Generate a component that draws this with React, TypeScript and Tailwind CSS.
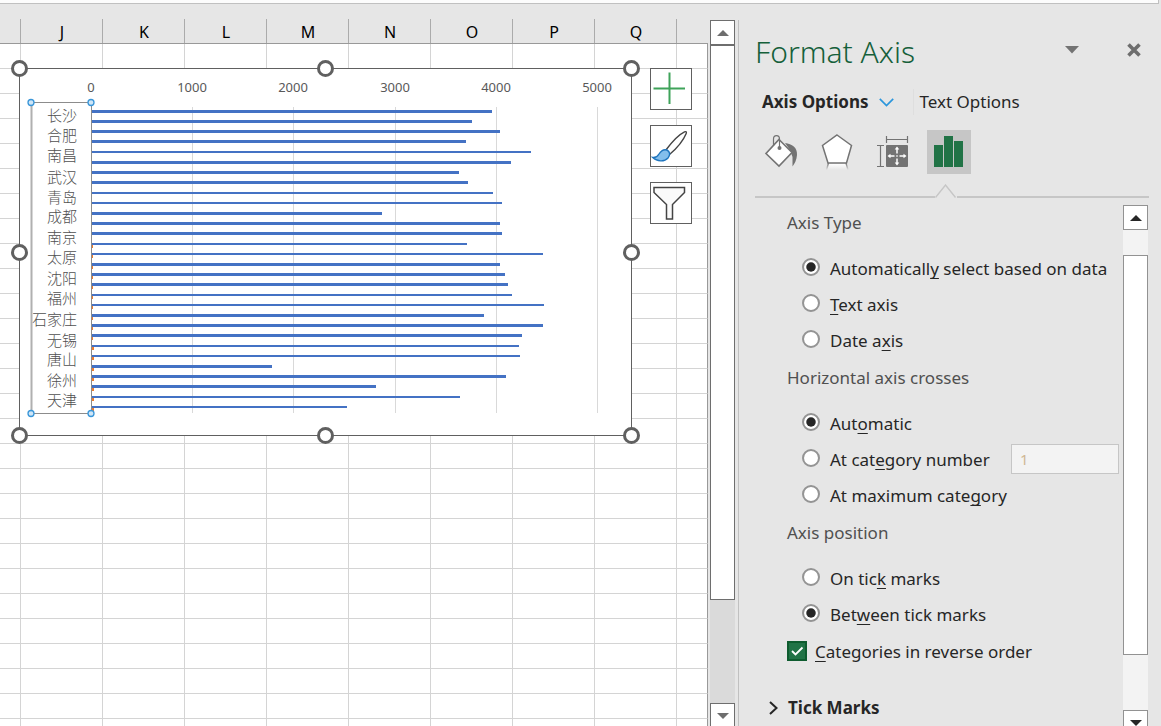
import React from "react";

const columns = ["J", "K", "L", "M", "N", "O", "P", "Q"];
const gridRows = Array.from({ length: 28 }, (_, i) => i);

// [top, thickness, right end, width of the second series]
const bars: [number, number, number, number][] = [
  [110, 3, 492, 0], [120, 3, 472, 0], [130, 3, 500, 0], [140, 3, 466, 0], [151, 2, 531, 0],
  [161, 3, 511, 0], [171, 3, 459, 0], [181, 3, 468, 0], [192, 2, 493, 0], [202, 2, 502, 0],
  [212, 3, 382, 0], [222, 3, 500, 0], [232, 3, 502, 0], [243, 2, 467, 1], [253, 2, 543, 1],
  [263, 3, 500, 1], [273, 3, 505, 1], [283, 3, 508, 1], [294, 2, 512, 1], [304, 2, 544, 1],
  [314, 3, 484, 1], [324, 3, 543, 1], [334, 3, 522, 1], [345, 2, 519, 2], [355, 2, 520, 2],
  [365, 3, 272, 2], [375, 3, 506, 2], [385, 3, 376, 2], [396, 2, 460, 2], [406, 2, 347, 2],
];

const categories: [string, number][] = [
  ["长沙", 121], ["合肥", 141], ["南昌", 161], ["武汉", 183], ["青岛", 203],
  ["成都", 222], ["南京", 243], ["太原", 263], ["沈阳", 284], ["福州", 304],
  ["石家庄", 325], ["无锡", 346], ["唐山", 365], ["徐州", 386], ["天津", 406],
];

const ticks: [string, number][] = [
  ["0", 91], ["1000", 192], ["2000", 293], ["3000", 395], ["4000", 496], ["5000", 597],
];

function Chart() {
  return (
    <svg
      viewBox="10 59 632 386"
      className="absolute left-[10px] top-[55px] h-[386px] w-[632px]"
      role="img"
      aria-label="Bar chart"
    >
      <rect x="19.5" y="68.5" width="612" height="367" fill="#fff" stroke="#606060" />
      {ticks.slice(1).map(([t, x]) => (
        <rect key={t} x={x} y="107" width="1" height="306" fill="#d9d9d9" />
      ))}
      {ticks.map(([t, x]) => (
        <text key={t} x={x} y="92" textAnchor="middle" className="fill-[#595959] font-['Noto_Sans',sans-serif] text-[13px]">
          {t}
        </text>
      ))}
      {bars.map(([y, h, end, extra]) => (
        <g key={y}>
          <rect x="92" y={y} width={end - 92} height={h} fill="#4472c4" />
          {extra > 0 && <rect x="92" y={y + h} width={extra} height="3" fill="#ed7d31" />}
        </g>
      ))}
      {categories.map(([name, y]) => (
        <text key={name} x="77" y={y} textAnchor="end" className="fill-[#505050] font-['Noto_Sans_CJK_SC',sans-serif] text-[15px] font-light">
          {name}
        </text>
      ))}
      <path d="M31.5 102V413" stroke="#b0b0b0" strokeWidth="2" />
      <path d="M31 102.5H91.5V413.5H31" fill="none" stroke="#8c8c8c" />
      {[31, 91].map((x) =>
        [102.5, 413.5].map((y) => (
          <circle key={`${x}-${y}`} cx={x} cy={y} r="3" fill="#cfe6f7" stroke="#3a96d8" strokeWidth="1.3" />
        )),
      )}
      {[19.5, 325.5, 631.5].map((x) =>
        [68.5, 252.5, 435.5].map((y) =>
          x === 325.5 && y === 252.5 ? null : (
            <circle key={`${x}-${y}`} cx={x} cy={y} r="7" fill="#fff" stroke="#606060" strokeWidth="3" />
          ),
        ),
      )}
    </svg>
  );
}

function ChartButton({ label, children }: { label: string; children: React.ReactNode }) {
  return (
    <button aria-label={label} className="size-[42px] border border-[#606060] bg-white">
      <svg viewBox="0 0 40 40" className="size-10" fill="none">
        {children}
      </svg>
    </button>
  );
}

function Sheet() {
  return (
    <section className="relative min-w-0 flex-1 overflow-hidden bg-white">
      <table className="w-full table-fixed border-separate border-spacing-0">
        <colgroup>
          <col className="w-[21px]" />
          {columns.map((c) => (
            <col key={c} className="w-[82px]" />
          ))}
          <col />
        </colgroup>
        <thead>
          <tr className="h-10 bg-[#e6e6e6]">
            {["", ...columns, "end"].map((c) => (
              <th key={c} className="border-b border-[#999] p-0 align-bottom font-normal">
                <div
                  className={
                    c === "end"
                      ? "h-6"
                      : "flex h-6 items-center justify-center border-r border-[#ababab] pl-px pt-0.5 text-[16px] leading-6 text-black"
                  }
                >
                  {c === "end" ? "" : c}
                </div>
              </th>
            ))}
          </tr>
        </thead>
        <tbody>
          {gridRows.map((r) => (
            <tr key={r} className="h-[25px]">
              {["", ...columns].map((c) => (
                <td key={c} className="border-b border-r border-[#d4d4d4] p-0" />
              ))}
              <td className="border-b border-r border-b-[#d4d4d4] border-r-[#999] p-0" />
            </tr>
          ))}
        </tbody>
      </table>
      <Chart />
      <div className="absolute left-[650px] top-16 flex flex-col gap-[15px]">
        <ChartButton label="Chart elements">
          <path d="M2.500 19.500H34M18.500 3.500V35" stroke="#3fa35a" strokeWidth="2" />
        </ChartButton>
        <ChartButton label="Chart styles">
          <path d="M14.5 24.5C20 17 28 8.500 33.500 5.800C35 5.200 35.800 6 35.200 7.500C32.500 14 25 23 18.500 28.500Z" fill="#fff" stroke="#444" strokeWidth="1.4" />
          <path d="M1.800 31.500C5 32 6.500 30.500 8 28C10 24.800 13 23 16 24C19 25.500 19.500 29 17 32C13.500 36 6 35.800 1.800 31.500Z" fill="#83beec" stroke="#1e74bd" strokeWidth="1.400" />
        </ChartButton>
        <ChartButton label="Chart filters">
          <path d="M3 4.500H33.500V9.500L21.500 21.500V36H15.500V21.500L3 9.500Z" fill="#fafafa" stroke="#444" strokeWidth="1.500" />
        </ChartButton>
      </div>
    </section>
  );
}

function SheetScrollbar() {
  return (
    <div className="mr-[3px] mt-4 flex w-[25px] shrink-0 flex-col bg-[#dadada]">
      <button aria-label="Scroll up" className="flex h-[25px] items-center justify-center border border-[#6e6e6e] bg-white">
        <svg viewBox="0 0 12 6" className="h-1.5 w-3">
          <path d="M6 0L12 6H0Z" fill="#6e6e6e" />
        </svg>
      </button>
      <div className="h-[555px] border border-[#6e6e6e] bg-white" />
      <div className="flex-1" />
      <button aria-label="Scroll down" className="flex h-[23px] items-center justify-center border border-b-0 border-[#6e6e6e] bg-white pt-0.5">
        <svg viewBox="0 0 12 6" className="h-1.5 w-3">
          <path d="M0 0H12L6 6Z" fill="#6e6e6e" />
        </svg>
      </button>
    </div>
  );
}

function Accel({ text, at }: { text: string; at: number }) {
  return (
    <span className="whitespace-pre">
      {text.slice(0, at)}
      <u className="underline decoration-1 underline-offset-[3px] [text-decoration-skip-ink:none]">{text[at]}</u>
      {text.slice(at + 1)}
    </span>
  );
}

function Radio({ name, text, at, checked = false }: { name: string; text: string; at: number; checked?: boolean }) {
  return (
    <label className="flex h-9 items-center gap-2.5 pl-[15px]">
      <input
        type="radio"
        name={name}
        defaultChecked={checked}
        className="mb-1 size-[18px] shrink-0 appearance-none rounded-full border-2 border-[#949494] bg-white bg-clip-padding before:block before:size-full before:rounded-full checked:before:scale-[0.68] checked:before:bg-[#262626]"
      />
      <Accel text={text} at={at} />
    </label>
  );
}

function Group({ title, children }: { title: string; children: React.ReactNode }) {
  return (
    <fieldset className="mb-px">
      <legend className="mb-2.5 h-9 leading-9 text-[#505050]">{title}</legend>
      {children}
    </fieldset>
  );
}

function IconTab({ label, active = false, children }: { label: string; active?: boolean; children: React.ReactNode }) {
  return (
    <button aria-label={label} aria-pressed={active} className={active ? "size-11 bg-[#c6c6c6]" : "size-11"}>
      <svg viewBox="0 0 44 44" className="size-11" fill="none">
        {children}
      </svg>
    </button>
  );
}

function PaneScrollbar() {
  return (
    <div className="flex w-[25px] shrink-0 flex-col bg-[#f3f3f3]">
      <button aria-label="Scroll options up" className="flex h-[25px] shrink-0 items-center justify-center border border-[#929292] bg-white">
        <svg viewBox="0 0 12 6" className="h-1.5 w-3">
          <path d="M6 0L12 6H0Z" fill="#262626" />
        </svg>
      </button>
      <div className="mt-[25px] h-[400px] shrink-0 border border-[#929292] bg-white" />
      <div className="flex-1" />
      <button aria-label="Scroll options down" className="flex h-4 shrink-0 items-end justify-center border border-b-0 border-[#929292] bg-white">
        <svg viewBox="0 0 12 6" className="h-1.5 w-3">
          <path d="M0 0H12L6 6Z" fill="#262626" />
        </svg>
      </button>
    </div>
  );
}

function FormatPane() {
  return (
    <aside className="mt-4 flex w-[423px] shrink-0 flex-col border-l border-[#c0c0c0] pr-3">
      <header className="mt-2.5 flex h-11 items-center pl-4">
        <h1 className="flex-1 text-[30px] font-light leading-[44px] text-[#15603a]">Format Axis</h1>
        <button aria-label="Pane options" className="mb-1 mr-12">
          <svg viewBox="0 0 14 8" className="h-2 w-3.5">
            <path d="M0 0H14L7 7.500Z" fill="#737373" />
          </svg>
        </button>
        <button aria-label="Close pane" className="mb-1 mr-2">
          <svg viewBox="0 0 14 14" className="size-3.5">
            <path d="M1.500 1.500L12.500 12.500M12.500 1.500L1.500 12.500" stroke="#6e6e6e" strokeWidth="3.600" />
          </svg>
        </button>
      </header>

      <nav className="mt-2.5 flex h-9 items-center pl-[23px] text-[#262626]">
        <button className="flex items-center gap-2.5 font-bold">
          Axis Options
          <svg viewBox="0 0 15 9" className="h-[9px] w-[15px]" fill="none">
            <path d="M0.800 0.800L7.500 7.500L14.200 0.800" stroke="#2b96dc" strokeWidth="1.700" />
          </svg>
        </button>
        <button className="ml-[19px] border-l border-[#dedede] pl-1.5">Text Options</button>
      </nav>

      <div className="mt-2.5 flex gap-3 pl-5">
        <IconTab label="Fill and line">
          <path d="M26 13C33 14 38.500 17 38 25C37.700 30 35.500 34 33.500 36.500V27L31 20Z" fill="#737373" />
          <path d="M20 9.500L33 22.500L20 36L7 23.500Z" fill="#fff" stroke="#737373" strokeWidth="1.600" />
          <path d="M14.500 16V9C14.500 4.500 20.500 4.500 20.500 9V18" stroke="#737373" strokeWidth="1.200" />
          <circle cx="20.500" cy="18" r="2" fill="#737373" />
        </IconTab>
        <IconTab label="Effects">
          <defs>
            <linearGradient id="reflection" x1="0" y1="0" x2="0" y2="1">
              <stop offset="0" stopColor="#fff" />
              <stop offset="1" stopColor="#e6e6e6" />
            </linearGradient>
            <linearGradient id="reflectionEdge" x1="0" y1="33" x2="0" y2="40" gradientUnits="userSpaceOnUse">
              <stop offset="0" stopColor="#737373" />
              <stop offset="1" stopColor="#e6e6e6" />
            </linearGradient>
          </defs>
          <path d="M13 33.500H32L33.500 40H11.500Z" fill="url(#reflection)" />
          <path d="M13.500 33L11.500 40M31 33L33 40" stroke="url(#reflectionEdge)" strokeWidth="1.400" />
          <path d="M22 5L36.500 15.500L31.500 33H13L7.500 15.500Z" fill="#fff" stroke="#737373" strokeWidth="1.500" />
        </IconTab>
        <IconTab label="Size and properties">
          <rect x="15" y="15" width="22" height="22" rx="1" fill="#737373" />
          <path d="M15.500 6V13M36.500 6V13M15.500 9.500H36.500M6 15.500H13M6 36.500H13M9.500 15.500V36.500" stroke="#737373" strokeWidth="1.200" />
          <path d="M26 18V23.500M26 28.500V34M18.500 26H23.500M28.500 26H33.500M25.300 26H26.700" stroke="#fff" strokeWidth="1.500" />
          <path d="M26 16.500L28.300 19.500H23.700ZM26 35.500L23.700 32.500H28.300ZM16.500 26L19.500 23.700V28.300ZM35.500 26L32.500 28.300V23.700Z" fill="#fff" />
        </IconTab>
        <IconTab label="Axis options" active>
          <path d="M7 15H16V37H7ZM17 6H26V37H17ZM27 11H36V37H27Z" fill="#217346" />
        </IconTab>
      </div>

      <div className="ml-4 mt-2.5 flex items-end">
        <div className="h-0.5 w-[180px] bg-[#c6c6c6]" />
        <svg viewBox="0 0 22 14" className="h-3.5 w-[22px]" fill="none">
          <path d="M0.500 13.500L10.500 1L20.500 13.500" stroke="#c6c6c6" strokeWidth="1.400" />
        </svg>
        <div className="h-0.5 flex-1 bg-[#c6c6c6]" />
      </div>

      <div className="mr-px mt-[7px] flex min-h-0 flex-1">
        <form className="min-w-0 flex-1 overflow-hidden pl-12 text-[#262626]">
          <Group title="Axis Type">
            <Radio name="type" text="Automatically select based on data" at={12} checked />
            <Radio name="type" text="Text axis" at={0} />
            <Radio name="type" text="Date axis" at={6} />
          </Group>
          <Group title="Horizontal axis crosses">
            <Radio name="crosses" text="Automatic" at={3} checked />
            <div className="flex items-start justify-between pr-1">
              <Radio name="crosses" text="At category number" at={6} />
              <input
                aria-label="Category number"
                disabled
                defaultValue="1"
                className="mt-0.5 h-[30px] w-[108px] border border-[#c6c6c6] bg-[#f3f3f3] pl-2 text-[15px] text-[#d0b894]"
              />
            </div>
            <Radio name="crosses" text="At maximum category" at={15} />
          </Group>
          <Group title="Axis position">
            <Radio name="position" text="On tick marks" at={6} />
            <Radio name="position" text="Between tick marks" at={3} checked />
          </Group>
          <label className="flex h-9 items-center gap-2">
            <span className="mb-0.5 grid size-5 shrink-0">
              <input
                type="checkbox"
                defaultChecked
                className="col-start-1 row-start-1 size-5 appearance-none border-2 border-[#0e5c2f] bg-[#217346]"
              />
              <svg viewBox="0 0 20 20" className="pointer-events-none col-start-1 row-start-1 size-5" fill="none">
                <path d="M5 10L8.500 13.500L15.500 6.500" stroke="#fff" strokeWidth="1.800" />
              </svg>
            </span>
            <Accel text="Categories in reverse order" at={0} />
          </label>
          <button type="button" className="-ml-[18px] mt-5 flex h-9 items-center gap-2.5 font-bold">
            <svg viewBox="0 0 9 14" className="h-3.5 w-[9px]" fill="none">
              <path d="M1 1L7.500 7L1 13" stroke="#262626" strokeWidth="2" />
            </svg>
            Tick Marks
          </button>
        </form>
        <PaneScrollbar />
      </div>
    </aside>
  );
}

export default function App() {
  return (
    <main className="flex h-screen flex-col overflow-hidden bg-[#e6e6e6] font-['Noto_Sans','Noto_Sans_CJK_SC',sans-serif] text-[17px]">
      <div className="mr-0.5 h-1 shrink-0 border-b border-r border-[#c0c0c0] bg-[#fcfcfc]" />
      <div className="flex min-h-0 flex-1">
        <Sheet />
        <div className="w-0.5 shrink-0" />
        <SheetScrollbar />
        <FormatPane />
      </div>
    </main>
  );
}
